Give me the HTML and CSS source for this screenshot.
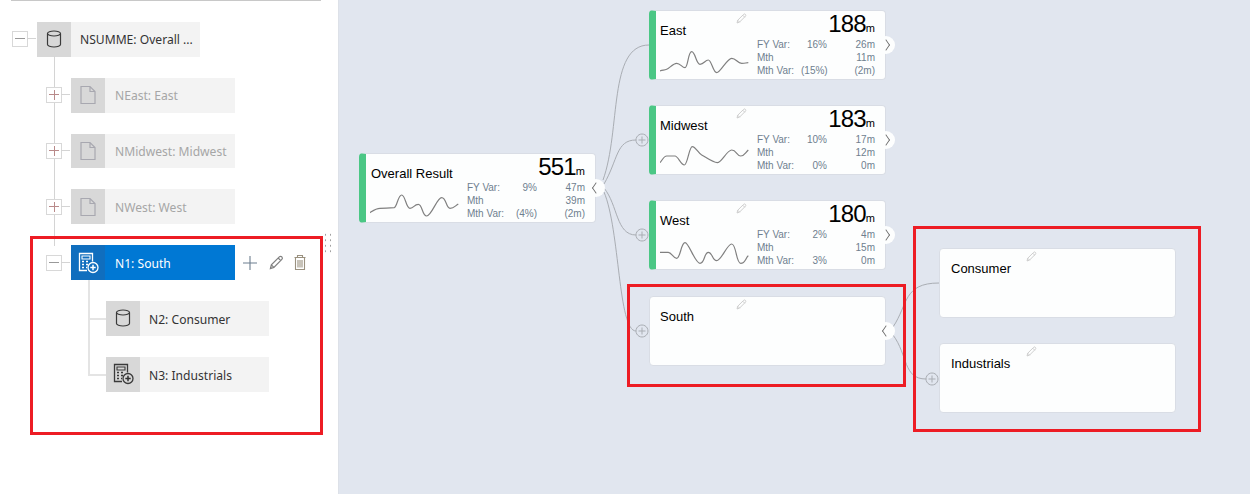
FILE: index.html
```html
<!DOCTYPE html>
<html lang="en">
  <head>
    <meta charset="UTF-8" />
    <title>Tree and flow</title>
    <link rel="stylesheet" href="styles.css">
  </head>
  <body>
    <svg class="defs" width="0" height="0">
      <symbol id="i-db" viewBox="0 0 20 20">
        <path d="M3.500 4.500v11c0 1.300 3 2.500 6.500 2.500s6.500-1.200 6.500-2.500v-11M3.500 4.500c0-1.300 3-2.500 6.500-2.500s6.500 1.200 6.500 2.500-3 2.500-6.500 2.500-6.500-1.200-6.500-2.500z" fill="none" stroke="currentColor" stroke-width="1.200"/>
      </symbol>
      <symbol id="i-doc" viewBox="0 0 20 20">
        <path d="M3 1.500h9l5 5v12h-14zM12 1.500v5h5" fill="none" stroke="currentColor" stroke-width="1.200"/>
      </symbol>
      <symbol id="i-calc" viewBox="0 0 22 22">
        <path d="M10 18.500h-7.500v-17h13v8" fill="none" stroke="currentColor" stroke-width="1.300"/>
        <path d="M5 4h8v3h-8z" fill="none" stroke="currentColor" stroke-width="1.100"/>
        <path d="M5 9.500h2M9 9.500h2M5 12.500h2M9 12.500h2M5 15.500h2M9 15.500h1" stroke="currentColor" stroke-width="1.500"/>
        <circle cx="16" cy="15.500" r="5" fill="var(--badge)" stroke="currentColor" stroke-width="1.300"/>
        <path d="M16 12.800v5.400M13.300 15.500h5.400" stroke="var(--badge-plus)" stroke-width="1.500"/>
      </symbol>
      <symbol id="i-pencil" viewBox="0 0 16 16">
        <path d="M1.500 14.500l1-4 8.500-8.500c.8-.8 2-.8 2.700 0s.8 1.900 0 2.700l-8.500 8.500zM2.500 10.500l3 3M9.800 3.200l3 3" fill="none" stroke="currentColor" stroke-width="1.300"/>
      </symbol>
    </svg>

    <div class="page">
      <aside class="sidebar">
        <div class="tree">
          <div class="row root">
            <span class="expander minus"></span>
            <div class="node">
              <span class="node-icon"><svg width="20" height="20"><use href="#i-db"/></svg></span>
              <span class="node-label">NSUMME: Overall ...</span>
            </div>
          </div>

          <div class="row child off">
            <span class="expander plus"></span>
            <div class="node">
              <span class="node-icon"><svg width="20" height="20"><use href="#i-doc"/></svg></span>
              <span class="node-label">NEast: East</span>
            </div>
          </div>

          <div class="row child off">
            <span class="expander plus"></span>
            <div class="node">
              <span class="node-icon"><svg width="20" height="20"><use href="#i-doc"/></svg></span>
              <span class="node-label">NMidwest: Midwest</span>
            </div>
          </div>

          <div class="row child off">
            <span class="expander plus"></span>
            <div class="node">
              <span class="node-icon"><svg width="20" height="20"><use href="#i-doc"/></svg></span>
              <span class="node-label">NWest: West</span>
            </div>
          </div>

          <div class="row child active">
            <span class="expander minus"></span>
            <div class="node">
              <span class="node-icon"><svg width="22" height="22"><use href="#i-calc"/></svg></span>
              <span class="node-label">N1: South</span>
            </div>
            <div class="actions">
              <svg class="act-plus" width="16" height="16" viewBox="0 0 16 16"><path d="M8 1v14M1 8h14" stroke="currentColor" stroke-width="1.100"/></svg>
              <svg class="act-edit" width="15" height="15"><use href="#i-pencil"/></svg>
              <svg class="act-trash" width="12" height="15" viewBox="0 0 12 15">
                <path d="M1.500 3v11.500h9v-11.500M.5 2.500h11M3.500 2.500v-2h5v2M4 5v7.500M6 5v7.500M8 5v7.500" fill="none" stroke="currentColor" stroke-width="1.100"/>
              </svg>
            </div>
          </div>

          <div class="row grand first">
            <div class="node">
              <span class="node-icon"><svg width="20" height="20"><use href="#i-db"/></svg></span>
              <span class="node-label">N2: Consumer</span>
            </div>
          </div>

          <div class="row grand last">
            <div class="node">
              <span class="node-icon"><svg width="22" height="22"><use href="#i-calc"/></svg></span>
              <span class="node-label">N3: Industrials</span>
            </div>
          </div>
        </div>
        <div class="grip"></div>
        <div class="frame frame-tree"></div>
      </aside>

      <main class="canvas">
        <!-- canvas coords, x is page x minus 339 -->
        <svg class="links" width="911" height="494" viewBox="339 0 911 494">
          <g fill="none" stroke="#a9adb3" stroke-width="1">
            <path d="M603 180C621 130 608 45 649 45"/>
            <path d="M604 184C618 160 616 140 636 140"/>
            <path d="M604 188C618 205 616 235 636 235"/>
            <path d="M604 192C620 230 618 331 636 331"/>
            <path d="M893 327C908 305 903 283 939 283"/>
            <path d="M893 335C908 355 903 379 926 379"/>
          </g>
          <g fill="#e1e6ef" stroke="#a9adb3" stroke-width="1">
            <path d="M642 134a6 6 0 1 1-.01 0zM642 136.500v7M638.500 140h7"/>
            <path d="M642 229a6 6 0 1 1-.01 0zM642 231.500v7M638.500 235h7"/>
            <path d="M642 325a6 6 0 1 1-.01 0zM642 327.500v7M638.500 331h7"/>
            <path d="M932 373a6 6 0 1 1-.01 0zM932 375.500v7M928.500 379h7"/>
          </g>
        </svg>

        <section class="card green n-overall">
          <div class="card-left">
            <div class="card-title">Overall Result</div>
            <svg class="spark" width="90" height="28" viewBox="0 0 90 28"><path d="M0 21.700C4 19 6 17.300 10 17.300S20 17 24.300 16.700C27 16 28 4 31.700 4S36 17.300 40 17.300 44 13.300 48.300 13.300 52 25 56.700 25 67 6.700 71.700 6.700 76 17.300 80 17.300 85 15 88.300 13"/></svg>
          </div>
          <div class="card-right">
            <div class="card-value">551<small>m</small></div>
            <div class="stats">
              <span>FY Var:</span><span>9%</span><span>47m</span>
              <span>Mth</span><span></span><span>39m</span>
              <span>Mth Var:</span><span>(4%)</span><span>(2m)</span>
            </div>
          </div>
          <span class="toggle left"></span>
        </section>

        <section class="card green n-east">
          <svg class="edit" width="11" height="11"><use href="#i-pencil"/></svg>
          <div class="card-left">
            <div class="card-title">East</div>
            <svg class="spark" width="90" height="28" viewBox="0 0 90 28"><path d="M0 23C3 22 4 22.300 6.700 21.300S13 15.300 16.700 15.300 22 19.700 25 19.700 28 3.700 31.700 3.700 36 16.300 40 16.300 45 12 48.300 12 53 24.700 56.700 24.700 67 10.300 71.700 10.300 77 15.300 81.700 15.300 85 14.700 88.300 14.700"/></svg>
          </div>
          <div class="card-right">
            <div class="card-value">188<small>m</small></div>
            <div class="stats">
              <span>FY Var:</span><span>16%</span><span>26m</span>
              <span>Mth</span><span></span><span>11m</span>
              <span>Mth Var:</span><span>(15%)</span><span>(2m)</span>
            </div>
          </div>
          <span class="toggle"></span>
        </section>

        <section class="card green n-midwest">
          <svg class="edit" width="11" height="11"><use href="#i-pencil"/></svg>
          <div class="card-left">
            <div class="card-title">Midwest</div>
            <svg class="spark" width="90" height="28" viewBox="0 0 90 28"><path d="M0 19.700C3 16 4 13 6.700 13S12 13 15 13 21 22 24.300 22 29 3.700 32.300 3.700 38 10 41.700 12 53 19.700 57.300 19.700 67 7 71.700 7 77 13 80.700 13 85 10 88.300 7"/></svg>
          </div>
          <div class="card-right">
            <div class="card-value">183<small>m</small></div>
            <div class="stats">
              <span>FY Var:</span><span>10%</span><span>17m</span>
              <span>Mth</span><span></span><span>12m</span>
              <span>Mth Var:</span><span>0%</span><span>0m</span>
            </div>
          </div>
          <span class="toggle"></span>
        </section>

        <section class="card green n-west">
          <svg class="edit" width="11" height="11"><use href="#i-pencil"/></svg>
          <div class="card-left">
            <div class="card-title">West</div>
            <svg class="spark" width="90" height="28" viewBox="0 0 90 28"><path d="M0 14.300C3 14.300 5 14.300 8.300 14.300S13 20.300 16.700 20.300 21 4.700 25 4.700 35 25.300 40 25.300 44 14.300 48.300 14.300 52 22.700 56.700 22.700 67 6 71.700 6 76 25.300 80.700 25.300 85 21 88.300 17.700"/></svg>
          </div>
          <div class="card-right">
            <div class="card-value">180<small>m</small></div>
            <div class="stats">
              <span>FY Var:</span><span>2%</span><span>4m</span>
              <span>Mth</span><span></span><span>15m</span>
              <span>Mth Var:</span><span>3%</span><span>0m</span>
            </div>
          </div>
          <span class="toggle"></span>
        </section>

        <section class="card n-south">
          <svg class="edit" width="11" height="11"><use href="#i-pencil"/></svg>
          <div class="card-left"><div class="card-title">South</div></div>
          <span class="toggle left"></span>
        </section>

        <section class="card n-consumer">
          <svg class="edit" width="11" height="11"><use href="#i-pencil"/></svg>
          <div class="card-left"><div class="card-title">Consumer</div></div>
        </section>

        <section class="card n-industrials">
          <svg class="edit" width="11" height="11"><use href="#i-pencil"/></svg>
          <div class="card-left"><div class="card-title">Industrials</div></div>
        </section>

        <div class="frame frame-south"></div>
        <div class="frame frame-kids"></div>
      </main>
    </div>
  </body>
</html>
```

FILE: styles.css
```css
:root {
  --canvas: #e1e6ef;
  --line: #d4d4d4;
  --red: #ed1c24;
  --green: #4bc785;
  --blue: #0078d4;
  --badge: #d8d8d8;
  --badge-plus: #333333;
}

body {
  margin: 0;
  font-family: 'Liberation Sans', Arial, sans-serif;
  background-color: #fff;
  overflow: hidden;
}

.defs {
  position: absolute;
}

.page {
  display: flex;
  width: 1250px;
  height: 494px;
}

/* left tree */
.sidebar {
  position: relative;
  box-sizing: border-box;
  width: 339px;
  flex: none;
  padding-top: 22px;
  border-right: 1px solid #dde1e8;
  font-family: 'Noto Sans', sans-serif;
}

.sidebar::before {
  content: '';
  position: absolute;
  top: 0;
  left: 11px;
  width: 310px;
  height: 1px;
  background-color: #c8c8c8;
}

.tree {
  display: flex;
  flex-direction: column;
  gap: 21px;
}

.row {
  position: relative;
  display: flex;
  align-items: center;
  height: 34.8px;
}

.root { padding-left: 12px; }
.child { padding-left: 46px; }
.grand { padding-left: 106px; }

.expander {
  position: relative;
  box-sizing: border-box;
  flex: none;
  width: 16px;
  height: 16px;
  margin-right: 9px;
  border: 1px solid #d8d8d8;
  background-color: #fff;
  z-index: 1;
}

.expander::before {
  content: '';
  position: absolute;
  left: 2px;
  right: 2px;
  top: 6px;
  height: 1px;
  background-color: #999;
}

.expander::after {
  content: '';
  position: absolute;
  left: 100%;
  top: 6px;
  width: 9px;
  height: 1px;
  background-color: var(--line);
}

.plus::before {
  background-color: #b98a8a;
}

.plus {
  background-image: linear-gradient(#b98a8a, #b98a8a);
  background-size: 1px 10px;
  background-position: center;
  background-repeat: no-repeat;
}

.node {
  display: flex;
  width: 164px;
  height: 100%;
  background-color: #f3f3f3;
  color: #333;
  font-size: 12.1px;
}

.root .node,
.grand .node { width: 163px; }

.node-icon {
  display: flex;
  align-items: center;
  justify-content: center;
  flex: none;
  width: 34px;
  background-color: #d8d8d8;
  color: #3a3a3a;
}

.node-label {
  align-self: center;
  padding-top: 1px;
  padding-left: 9px;
  white-space: nowrap;
}

.child .node-label { padding-left: 10px; }
.grand .node-label { padding-top: 2px; }

.off .node { color: #a6a6a6; }
.off .node-icon { color: #a8a8b0; }

.active .node {
  background-color: var(--blue);
  color: #fff;
  --badge: #106ebe;
  --badge-plus: #fff;
}

.active .node-icon {
  background-color: #106ebe;
  color: #fff;
}

/* tree lines */
.root::after {
  content: '';
  position: absolute;
  left: 54px;
  top: 34px;
  width: 1px;
  height: 190px;
  background-color: var(--line);
}

.grand::before {
  content: '';
  position: absolute;
  left: 88px;
  top: 17px;
  width: 18px;
  height: 2px;
  background-color: #e4e4e4;
}

.first::after,
.last::after {
  content: '';
  position: absolute;
  left: 88px;
  top: -21px;
  width: 2px;
  height: 40px;
  background-color: #e4e4e4;
}

.last::after {
  top: -39px;
  height: 57px;
}

.actions {
  display: flex;
  align-items: center;
  gap: 10.5px;
  margin-left: 7px;
}

.act-plus { color: #6d7f8f; }
.act-edit { color: #808080; }
.act-trash { color: #9a917f; }

.grip {
  position: absolute;
  left: 323px;
  top: 232px;
  width: 10px;
  height: 22px;
  background-image: radial-gradient(#a0a0a0 0.7px, transparent 0.8px);
  background-size: 5px 5.5px;
}

/* canvas */
.canvas {
  position: relative;
  flex: 1;
  background-color: var(--canvas);
}

.links {
  position: absolute;
  left: 0;
  top: 0;
}

.card {
  position: absolute;
  box-sizing: border-box;
  display: flex;
  width: 237px;
  height: 70px;
  padding-left: 11px;
  background-color: #fdfefe;
  border: 1px solid #d9dde5;
  border-radius: 4px;
}

.green {
  border-left: 7px solid var(--green);
  padding-left: 4px;
}

.n-overall { left: 20px; top: 153px; }
.n-east { left: 310px; top: 10px; }
.n-midwest { left: 310px; top: 105px; }
.n-west { left: 310px; top: 200px; }
.n-south { left: 310px; top: 296px; padding-left: 10px; }
.n-consumer { left: 600px; top: 248px; }
.n-industrials { left: 600px; top: 343px; }

.card-left {
  width: 97px;
  flex: none;
}

.card-title {
  margin-top: 12px;
  font-size: 13px;
  line-height: 15px;
  color: #000;
}

.n-overall .card-title {
  margin-left: 1px;
}

.spark {
  display: block;
  margin-top: 10px;
}

.spark path {
  fill: none;
  stroke: #808080;
  stroke-width: 1.200;
}

.card-right {
  width: 118px;
  flex: none;
}

.card-value {
  margin-top: 3px;
  font-size: 24px;
  letter-spacing: -0.8px;
  line-height: 20px;
  text-align: right;
  color: #000;
}

.card-value small {
  font-size: 11px;
  letter-spacing: 0;
}

.stats {
  display: grid;
  grid-template-columns: 44px 26px 48px;
  margin-top: 0;
  font-size: 10px;
  line-height: 13px;
  color: #6f7f8f;
}

.stats span:nth-child(3n+2),
.stats span:nth-child(3n) {
  text-align: right;
  white-space: nowrap;
}

.edit {
  position: absolute;
  left: 86px;
  top: 2px;
  color: #c8c8c8;
}

.green .edit {
  left: 80px;
}

.toggle {
  position: absolute;
  right: -10px;
  top: 25px;
  width: 18px;
  height: 18px;
  border-radius: 50%;
  background-color: #fdfefe;
}

.toggle::after {
  content: '';
  position: absolute;
  left: 5px;
  top: 5px;
  width: 8px;
  height: 8px;
  border-top: 1.5px solid #666;
  border-right: 1.5px solid #666;
  box-sizing: border-box;
  transform: scaleX(.7) rotate(45deg);
}

.toggle.left::after {
  transform: scaleX(.7) rotate(225deg);
}

/* red callouts */
.frame {
  position: absolute;
  box-sizing: border-box;
  border: 3px solid var(--red);
}

.frame-tree { left: 30px; top: 236px; width: 293px; height: 199px; }
.frame-south { left: 288px; top: 284px; width: 279px; height: 103px; }
.frame-kids { left: 574px; top: 226px; width: 288px; height: 206px; }
```
